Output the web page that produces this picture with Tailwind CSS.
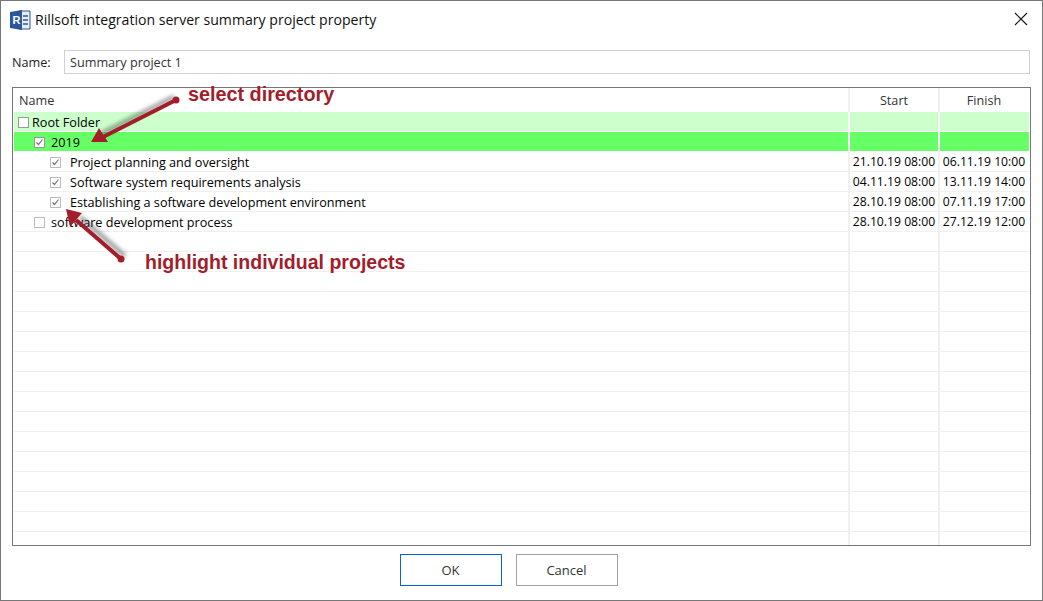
<!DOCTYPE html>
<html lang="en">
<head>
<meta charset="UTF-8">
<title>Rillsoft integration server summary project property</title>
<script src="https://cdn.jsdelivr.net/npm/@tailwindcss/browser@4"></script>
</head>
<body class="bg-white font-['Open_Sans',sans-serif] text-[12.65px] text-[#222]">
<div class="relative w-[1043px] h-[601px] overflow-hidden bg-white border-t border-b border-l border-r border-[#777] flex flex-col">

  <!-- title bar -->
  <div class="h-[39px] pb-px flex items-center pl-[9px] pr-[14px]">
    <svg class="w-[21px] h-[20px]" viewBox="0 0 21 20">
      <path d="M9 1h11v18H9z" fill="#e8edf5" stroke="#2b579a" stroke-width="1"/>
      <path d="M0 2l12-2v20L0 18z" fill="#2b579a"/>
      <path d="M13 6h5M13 10h5M13 14h5" stroke="#2b579a" stroke-width="1.4"/>
      <text x="2.5" y="13.5" fill="#fff" font-size="11" font-weight="700" font-family="Liberation Sans">R</text>
    </svg>
    <span class="ml-[4px] text-[14.1px] leading-none text-[#111]">Rillsoft integration server summary project property</span>
    <svg class="ml-auto mb-[2px] w-[14px] h-[14px]" viewBox="0 0 14 14"><path d="M1 1l12 12M13 1L1 13" stroke="#111" stroke-width="1.1" fill="none"/></svg>
  </div>

  <!-- name field -->
  <div class="mt-[10px] ml-[11px] mr-[12px] flex items-center">
    <span class="w-[52px] text-[#222]">Name:</span>
    <div class="flex-1 h-[24px] border border-[#d0d0d0] pl-[5px] flex items-center text-[#333]">Summary project 1</div>
  </div>

  <!-- table -->
  <div class="mt-[13px] mx-[11px] h-[459px] border border-[#777] overflow-hidden">
    <div class="h-[24px] ml-px flex text-[#333] bg-white">
      <div class="w-[834px] pl-[5px] flex items-center">Name</div>
      <div class="w-[90px] border-l-2 border-[#f0f0f0] flex items-center justify-center">Start</div>
      <div class="w-[90px] border-l-2 border-[#f0f0f0] flex items-center justify-center">Finish</div>
    </div>

    <div class="ml-px mr-px">
      <div class="h-[20px] flex bg-[#ccffcc] border-b border-white">
        <div class="w-[834px] pl-[4px] pt-[2px] flex items-center gap-[3px]"><span class="w-[11px] h-[11px] border border-[#999] bg-white"></span><span class="text-black">Root Folder</span></div>
        <div class="w-[90px] border-l-2 border-white"></div>
        <div class="w-[90px] border-l-2 border-white"></div>
      </div>
      <div class="h-[20px] flex bg-[#66ff66] border-b border-white">
        <div class="w-[834px] pl-[20px] pt-[2px] flex items-center gap-[6px]">
          <span class="w-[11px] h-[11px] border border-[#999] bg-white flex items-center justify-center"><svg class="w-[9px] h-[9px]" viewBox="0 0 9 9"><path d="M1.5 4.5l2 2 4-5" stroke="#777" stroke-width="1.2" fill="none"/></svg></span>
          <span class="text-black">2019</span>
        </div>
        <div class="w-[90px] border-l-2 border-white"></div>
        <div class="w-[90px] border-l-2 border-white"></div>
      </div>
      <div class="h-[20px] flex border-b border-[#f0f0f0] text-black">
        <div class="w-[834px] pl-[36px] pt-[2px] flex items-center gap-[9px]">
          <span class="w-[11px] h-[11px] border border-[#bbb] bg-white flex items-center justify-center"><svg class="w-[9px] h-[9px]" viewBox="0 0 9 9"><path d="M1.5 4.5l2 2 4-5" stroke="#777" stroke-width="1.2" fill="none"/></svg></span>
          <span>Project planning and oversight</span>
        </div>
        <div class="w-[90px] pt-[2px] border-l-2 border-[#f0f0f0] flex items-center justify-center text-[12.2px]">21.10.19 08:00</div>
        <div class="w-[90px] pt-[2px] border-l-2 border-[#f0f0f0] flex items-center justify-center text-[12.2px]">06.11.19 10:00</div>
      </div>
      <div class="h-[20px] flex border-b border-[#f0f0f0] text-black">
        <div class="w-[834px] pl-[36px] pt-[2px] flex items-center gap-[9px]">
          <span class="w-[11px] h-[11px] border border-[#bbb] bg-white flex items-center justify-center"><svg class="w-[9px] h-[9px]" viewBox="0 0 9 9"><path d="M1.5 4.5l2 2 4-5" stroke="#777" stroke-width="1.2" fill="none"/></svg></span>
          <span>Software system requirements analysis</span>
        </div>
        <div class="w-[90px] pt-[2px] border-l-2 border-[#f0f0f0] flex items-center justify-center text-[12.2px]">04.11.19 08:00</div>
        <div class="w-[90px] pt-[2px] border-l-2 border-[#f0f0f0] flex items-center justify-center text-[12.2px]">13.11.19 14:00</div>
      </div>
      <div class="h-[20px] flex border-b border-[#f0f0f0] text-black">
        <div class="w-[834px] pl-[36px] pt-[2px] flex items-center gap-[9px]">
          <span class="w-[11px] h-[11px] border border-[#bbb] bg-white flex items-center justify-center"><svg class="w-[9px] h-[9px]" viewBox="0 0 9 9"><path d="M1.5 4.5l2 2 4-5" stroke="#777" stroke-width="1.2" fill="none"/></svg></span>
          <span>Establishing a software development environment</span>
        </div>
        <div class="w-[90px] pt-[2px] border-l-2 border-[#f0f0f0] flex items-center justify-center text-[12.2px]">28.10.19 08:00</div>
        <div class="w-[90px] pt-[2px] border-l-2 border-[#f0f0f0] flex items-center justify-center text-[12.2px]">07.11.19 17:00</div>
      </div>
      <div class="h-[20px] flex border-b border-[#f0f0f0] text-black">
        <div class="w-[834px] pl-[20px] pt-[2px] flex items-center gap-[6px]">
          <span class="w-[11px] h-[11px] border border-[#bbb] bg-white"></span>
          <span>software development process</span>
        </div>
        <div class="w-[90px] pt-[2px] border-l-2 border-[#f0f0f0] flex items-center justify-center text-[12.2px]">28.10.19 08:00</div>
        <div class="w-[90px] pt-[2px] border-l-2 border-[#f0f0f0] flex items-center justify-center text-[12.2px]">27.12.19 12:00</div>
      </div>
      <!-- empty rows -->
      <div class="h-[20px] flex border-b border-[#f0f0f0]"><div class="w-[834px]"></div><div class="w-[90px] border-l-2 border-[#f0f0f0]"></div><div class="w-[90px] border-l-2 border-[#f0f0f0]"></div></div>
      <div class="h-[20px] flex border-b border-[#f0f0f0]"><div class="w-[834px]"></div><div class="w-[90px] border-l-2 border-[#f0f0f0]"></div><div class="w-[90px] border-l-2 border-[#f0f0f0]"></div></div>
      <div class="h-[20px] flex border-b border-[#f0f0f0]"><div class="w-[834px]"></div><div class="w-[90px] border-l-2 border-[#f0f0f0]"></div><div class="w-[90px] border-l-2 border-[#f0f0f0]"></div></div>
      <div class="h-[20px] flex border-b border-[#f0f0f0]"><div class="w-[834px]"></div><div class="w-[90px] border-l-2 border-[#f0f0f0]"></div><div class="w-[90px] border-l-2 border-[#f0f0f0]"></div></div>
      <div class="h-[20px] flex border-b border-[#f0f0f0]"><div class="w-[834px]"></div><div class="w-[90px] border-l-2 border-[#f0f0f0]"></div><div class="w-[90px] border-l-2 border-[#f0f0f0]"></div></div>
      <div class="h-[20px] flex border-b border-[#f0f0f0]"><div class="w-[834px]"></div><div class="w-[90px] border-l-2 border-[#f0f0f0]"></div><div class="w-[90px] border-l-2 border-[#f0f0f0]"></div></div>
      <div class="h-[20px] flex border-b border-[#f0f0f0]"><div class="w-[834px]"></div><div class="w-[90px] border-l-2 border-[#f0f0f0]"></div><div class="w-[90px] border-l-2 border-[#f0f0f0]"></div></div>
      <div class="h-[20px] flex border-b border-[#f0f0f0]"><div class="w-[834px]"></div><div class="w-[90px] border-l-2 border-[#f0f0f0]"></div><div class="w-[90px] border-l-2 border-[#f0f0f0]"></div></div>
      <div class="h-[20px] flex border-b border-[#f0f0f0]"><div class="w-[834px]"></div><div class="w-[90px] border-l-2 border-[#f0f0f0]"></div><div class="w-[90px] border-l-2 border-[#f0f0f0]"></div></div>
      <div class="h-[20px] flex border-b border-[#f0f0f0]"><div class="w-[834px]"></div><div class="w-[90px] border-l-2 border-[#f0f0f0]"></div><div class="w-[90px] border-l-2 border-[#f0f0f0]"></div></div>
      <div class="h-[20px] flex border-b border-[#f0f0f0]"><div class="w-[834px]"></div><div class="w-[90px] border-l-2 border-[#f0f0f0]"></div><div class="w-[90px] border-l-2 border-[#f0f0f0]"></div></div>
      <div class="h-[20px] flex border-b border-[#f0f0f0]"><div class="w-[834px]"></div><div class="w-[90px] border-l-2 border-[#f0f0f0]"></div><div class="w-[90px] border-l-2 border-[#f0f0f0]"></div></div>
      <div class="h-[20px] flex border-b border-[#f0f0f0]"><div class="w-[834px]"></div><div class="w-[90px] border-l-2 border-[#f0f0f0]"></div><div class="w-[90px] border-l-2 border-[#f0f0f0]"></div></div>
      <div class="h-[20px] flex border-b border-[#f0f0f0]"><div class="w-[834px]"></div><div class="w-[90px] border-l-2 border-[#f0f0f0]"></div><div class="w-[90px] border-l-2 border-[#f0f0f0]"></div></div>
      <div class="h-[20px] flex border-b border-[#f0f0f0]"><div class="w-[834px]"></div><div class="w-[90px] border-l-2 border-[#f0f0f0]"></div><div class="w-[90px] border-l-2 border-[#f0f0f0]"></div></div>
      <div class="h-[20px] flex"><div class="w-[834px]"></div><div class="w-[90px] border-l-2 border-[#f0f0f0]"></div><div class="w-[90px] border-l-2 border-[#f0f0f0]"></div></div>
    </div>
  </div>

  <!-- buttons -->
  <div class="mt-[8px] flex justify-center gap-[14px] pr-[26px] text-[13px]">
    <button class="w-[102px] h-[32px] pt-px border border-[#0a64c8] text-[#333]">OK</button>
    <button class="w-[102px] h-[32px] pt-px border border-[#a0a0a0] text-[#333]">Cancel</button>
  </div>

  <!-- annotations over the dialog -->
  <span class="absolute left-[187px] top-[81px] font-['Liberation_Sans',sans-serif] font-bold text-[19.8px] leading-[24px] text-[#a31d2b]">select directory</span>
  <span class="absolute left-[144px] top-[249px] font-['Liberation_Sans',sans-serif] font-bold text-[19.55px] leading-[24px] text-[#a31d2b]">highlight individual projects</span>
  <svg class="absolute left-0 top-0 w-[1041px] h-[599px] pointer-events-none" viewBox="0 0 1041 599">
    <g transform="translate(-1,-1)">
      <g class="blur-[2px]" opacity="0.55" transform="translate(-2,-3)">
        <path d="M176 100L103 137" stroke="#333" stroke-width="4" fill="none"/>
      </g>
      <g class="blur-[2px]" opacity="0.55" transform="translate(4,-3)">
        <path d="M121 259L76 220" stroke="#333" stroke-width="4" fill="none"/>
      </g>
      <path d="M176 100L103 137" stroke="#a31d2b" stroke-width="4" fill="none"/>
      <circle cx="176" cy="100" r="3.5" fill="#a31d2b"/>
      <path d="M91 142L108 142L99 128Z" fill="#a31d2b"/>
      <path d="M121 259L76 220" stroke="#a31d2b" stroke-width="4" fill="none"/>
      <circle cx="121" cy="259" r="3.5" fill="#a31d2b"/>
      <path d="M66 209L82 213L70 227Z" fill="#a31d2b"/>
    </g>
  </svg>
</div>
</body>
</html>
